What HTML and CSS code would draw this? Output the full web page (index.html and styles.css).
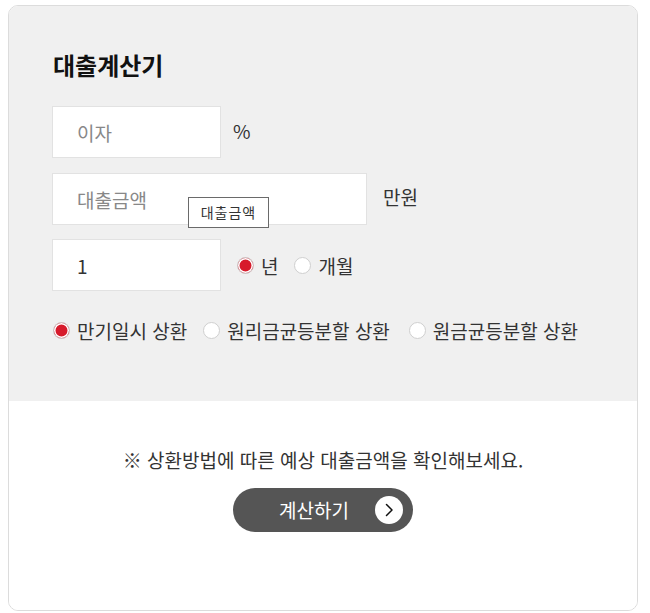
FILE: index.html
```html
<!DOCTYPE html>
<html lang="ko">
<head>
<meta charset="utf-8">
<title>대출계산기</title>
<link rel="stylesheet" href="styles.css">
</head>
<body>
<div class="calc">
  <div class="calc-top">
    <h2 class="calc-title">대출계산기</h2>
    <div class="row">
      <input class="field field-short" type="text" placeholder="이자">
      <span class="unit unit-pct">%</span>
    </div>
    <div class="row">
      <div class="field-wrap">
        <input class="field field-long" type="text" placeholder="대출금액">
        <span class="tooltip">대출금액</span>
      </div>
      <span class="unit unit-won">만원</span>
    </div>
    <div class="row">
      <input class="field field-short" type="text" value="1">
      <label class="radio radio-first"><input type="radio" name="period" checked><span>년</span></label>
      <label class="radio"><input type="radio" name="period"><span>개월</span></label>
    </div>
    <div class="repay">
      <label class="radio"><input type="radio" name="repay" checked><span>만기일시 상환</span></label>
      <label class="radio radio-wide"><input type="radio" name="repay"><span>원리금균등분할 상환</span></label>
      <label class="radio"><input type="radio" name="repay"><span>원금균등분할 상환</span></label>
    </div>
  </div>
  <div class="calc-bottom">
    <p class="notice">※ 상환방법에 따른 예상 대출금액을 확인해보세요.</p>
    <button class="btn-calc" type="button">
      <span class="btn-label">계산하기</span>
      <span class="btn-icon">
        <svg width="28" height="28" viewBox="0 0 28 28"><path d="M11.5 8.5 L17 14 L11.5 19.5" fill="none" stroke="#111" stroke-width="1.5" stroke-linecap="round" stroke-linejoin="round"/></svg>
      </span>
    </button>
  </div>
</div>
</body>
</html>
```

FILE: styles.css
```css
* { box-sizing: border-box; }
html, body { margin: 0; padding: 0; background: #fff; }
body {
  padding: 5px 12px 0 8px;
  font-family: "Noto Sans CJK KR", "Noto Sans", sans-serif;
  color: #333;
}
.calc {
  width: 630px;
  height: 606px;
  border: 1px solid #dcdcdc;
  border-radius: 10px;
  overflow: hidden;
  display: flex;
  flex-direction: column;
}
.calc-top {
  background: #f0f0f0;
  height: 395px;
  padding: 43px 0 0 43px;
}
.calc-title {
  margin: 0 0 25px 1px;
  font-size: 24px;
  line-height: 32px;
  font-weight: 700;
  color: #111;
}
.row {
  display: flex;
  align-items: center;
  height: 52px;
  margin-bottom: 15px;
}
.row:nth-of-type(2) { margin-bottom: 14px; }
.field {
  height: 52px;
  border: 1px solid #e2e2e2;
  background: #fff;
  padding: 0 0 0 24px;
  font-family: inherit;
  font-size: 19px;
  color: #333;
  outline: none;
}
.field::placeholder { color: #888; }
.field-short { width: 169px; }
.field-long { width: 315px; }
.field-wrap { position: relative; display: flex; }
.tooltip {
  position: absolute;
  left: 136px;
  top: 24px;
  width: 81px;
  height: 31px;
  border: 1px solid #6a6a6a;
  background: #fff;
  font-size: 14px;
  letter-spacing: 1px;
  line-height: 29px;
  text-align: center;
  color: #333;
}
.unit { font-size: 19px; color: #333; }
.unit-pct { margin-left: 12px; margin-top: -4px; }
.unit-won { margin-left: 16px; margin-top: -6px; }
.radio {
  display: inline-flex;
  align-items: center;
  font-size: 19px;
  color: #333;
  margin-right: 16px;
}
.radio-first { margin-left: 16px; margin-right: 16px; }
.radio input {
  appearance: none;
  -webkit-appearance: none;
  width: 17px;
  height: 17px;
  margin: 0 7px 0 0;
  border: 1px solid #cfcfcf;
  border-radius: 50%;
  background: #fff;
}
.radio input:checked {
  background: #d71a2b;
  box-shadow: inset 0 0 0 1.5px #fff;
}
.repay {
  display: flex;
  align-items: center;
  margin-top: 26px;
  padding-left: 1px;
}
.repay .radio { margin-right: 16px; }
.repay .radio-wide { margin-right: 19px; }
.calc-bottom {
  flex: 1;
  background: #fff;
  display: flex;
  flex-direction: column;
  align-items: center;
  padding-top: 46px;
}
.notice {
  margin: 0;
  font-size: 19px;
  line-height: 26px;
  color: #333;
}
.btn-calc {
  margin-top: 15px;
  width: 180px;
  height: 44px;
  border: none;
  border-radius: 22px;
  background: #555;
  display: flex;
  align-items: center;
  padding: 0 0 0 46px;
  gap: 26px;
  font-family: inherit;
  cursor: pointer;
}
.btn-label { color: #fff; font-size: 19px; line-height: 24px; }
.btn-icon {
  width: 28px;
  height: 28px;
  border-radius: 50%;
  background: #fff;
  display: flex;
}
```
